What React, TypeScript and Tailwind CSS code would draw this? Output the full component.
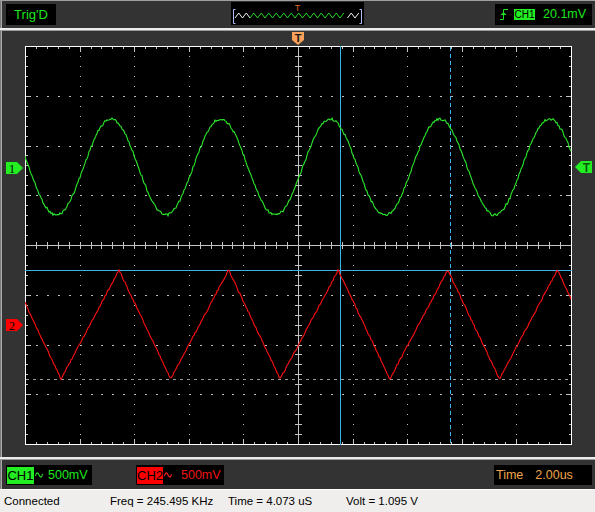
import React from "react";

const W = 546;
const H = 398;
const DX = W / 10;
const DY = H / 8;

const px = (v: number) => Math.round(v) + 0.5;

function noise(i: number, seed: number) {
  const s = Math.sin(i * 12.9898 + seed * 78.233) * 43758.5453;
  return s - Math.floor(s) - 0.5;
}

function sinePoints() {
  const pts: string[] = [];
  for (let x = 0; x <= W; x++) {
    const y = 121 - 48 * Math.cos((2 * Math.PI * (x - 86)) / 109.6) + noise(x, 1) * 2.6;
    pts.push(`${x},${y.toFixed(1)}`);
  }
  return pts.join(" ");
}

function trianglePoints() {
  const P = 109.6;
  const rise = 58;
  const fall = P - rise;
  const top = 224;
  const bottom = 333;
  const pts: string[] = [];
  for (let x = 0; x <= W; x++) {
    const t = (((x - 94) % P) + P) % P;
    let y = t < fall ? top + ((bottom - top) * t) / fall : bottom - ((bottom - top) * (t - fall)) / rise;
    y += noise(x, 2) * 1.8;
    pts.push(`${x},${y.toFixed(1)}`);
  }
  return pts.join(" ");
}

function Grid() {
  const ticks: React.ReactElement[] = [];
  const dots: React.ReactElement[] = [];

  for (let i = 1; i < 50; i++) {
    const x = px((i * DX) / 5);
    const len = i % 5 === 0 ? 5 : 2;
    ticks.push(<line key={`t${i}`} x1={x} y1={1} x2={x} y2={1 + len} />);
    ticks.push(<line key={`b${i}`} x1={x} y1={H} x2={x} y2={H - len} />);
    ticks.push(<line key={`c${i}`} x1={x} y1={196} x2={x} y2={203} />);
  }
  for (let j = 1; j < 40; j++) {
    const y = px((j * DY) / 5);
    const len = j % 5 === 0 ? 5 : 2;
    ticks.push(<line key={`l${j}`} x1={1} y1={y} x2={1 + len} y2={y} />);
    ticks.push(<line key={`r${j}`} x1={W} y1={y} x2={W - len} y2={y} />);
    ticks.push(<line key={`m${j}`} x1={270} y1={y} x2={277} y2={y} />);
  }

  for (let k = 1; k < 10; k++) {
    if (k === 5) continue;
    const col = Math.round(k * DX);
    for (let j = 1; j < 40; j++) {
      dots.push(<rect key={`v${k}-${j}`} x={col} y={Math.round((j * DY) / 5)} width={1} height={1} />);
    }
  }
  for (let k = 1; k < 8; k++) {
    if (k === 4) continue;
    const row = Math.round(k * DY);
    for (let i = 1; i < 50; i++) {
      dots.push(<rect key={`h${k}-${i}`} x={Math.round((i * DX) / 5)} y={row} width={2} height={1} />);
    }
  }

  return (
    <div className="w-[547px] h-[399px] bg-black shrink-0">
      <svg width={547} height={399} className="block" shapeRendering="crispEdges">
        <g fill="#bcbcbc">{dots}</g>
        <g stroke="#c4c4c4" strokeWidth={1}>
          <line x1={273.5} y1={0} x2={273.5} y2={399} />
          <line x1={0} y1={199.5} x2={547} y2={199.5} />
          {ticks}
        </g>
        <rect x={0.5} y={0.5} width={546} height={398} fill="none" stroke="#ffffff" />
        <line x1={0} y1={224.5} x2={547} y2={224.5} stroke="#3cb4e6" />
        <line x1={315.5} y1={0} x2={315.5} y2={399} stroke="#3cb4e6" />
        <line x1={425.5} y1={1} x2={425.5} y2={398} stroke="#3cb4e6" strokeDasharray="4 3" />
        <line x1={1} y1={333.5} x2={546} y2={333.5} stroke="#9a9a9a" strokeDasharray="3 4" />
        <g shapeRendering="auto">
          <polyline points={sinePoints()} fill="none" stroke="#2ae82a" strokeWidth={1.1} />
          <polyline points={trianglePoints()} fill="none" stroke="#ff1010" strokeWidth={1.1} />
        </g>
      </svg>
    </div>
  );
}

function TopWave() {
  const pts: [number, number][] = [];
  let up = false;
  for (let x = 4; x <= 129.01; x += 3.75) {
    pts.push([x, up ? 11 : 16]);
    up = !up;
  }
  const seg = (a: number, b: number) =>
    pts
      .filter(([x]) => x >= a - 0.01 && x <= b + 0.01)
      .map(([x, y]) => `${x},${y}`)
      .join(" ");
  return (
    <svg width={133} height={23} className="block">
      <text x={66.5} y={8.5} textAnchor="middle" fontSize={9} fill="#d8682c" fontFamily="Liberation Sans, Arial, sans-serif">
        T
      </text>
      <polyline points="4.5,7.5 2.5,7.5 2.5,21.5 4.5,21.5" fill="none" stroke="#b0bef8" />
      <polyline points="128.5,7.5 130.5,7.5 130.5,21.5 128.5,21.5" fill="none" stroke="#b0bef8" />
      <polyline points={seg(4, 19)} fill="none" stroke="#f2f2f2" />
      <polyline points={seg(19, 116)} fill="none" stroke="#22d822" />
      <polyline points={seg(116, 129)} fill="none" stroke="#f2f2f2" />
    </svg>
  );
}

function SineGlyph({ color }: { color: string }) {
  return (
    <svg width={8} height={8} className="block shrink-0">
      <path d="M0.5,5 C1.3,1 2.7,1 4,4 S6.7,7 7.5,3" fill="none" stroke={color} strokeWidth={1.1} />
    </svg>
  );
}

export default function App() {
  return (
    <div className="w-[595px] h-[512px] flex flex-col bg-[#333333] font-['Liberation_Sans',Arial,sans-serif] overflow-hidden">
      {/* top bar */}
      <div className="h-[28px] shrink-0 border-t border-[#a0a0a0] flex items-start pl-[6px] shadow-[inset_1px_0_0_#7c7c7c,inset_2px_0_0_#ababab]">
        <div className="mt-[3px] w-[50px] h-[21px] bg-black flex items-center justify-center text-[13px] leading-none text-[#1ee61e]">
          Trig'D
        </div>
        <div className="ml-[175px] mt-[1px] w-[133px] h-[23px] bg-black">
          <TopWave />
        </div>
        <div className="ml-[131px] mt-[3px] w-[97px] h-[21px] bg-black flex items-center pl-[5px]">
          <svg width={8} height={11} className="block shrink-0">
            <path d="M0,10.5 H3.5 V0.5 H8" fill="none" stroke="#22e022" />
            <path d="M0.5,6 L3.5,3 L6.5,6 Z" fill="#22e022" />
          </svg>
          <div className="ml-[6px] w-[21px] h-[11px] bg-[#22ee22] text-black text-[10px] leading-none flex items-center justify-center">
            CH1
          </div>
          <div className="ml-[8px] text-[12.5px] leading-none text-[#1ee61e]">20.1mV</div>
        </div>
      </div>

      {/* separator */}
      <div className="h-[3px] shrink-0 border-t-2 border-[#ececec] border-b border-b-[#9c9c9c]" />

      {/* scope area */}
      <div className="relative h-[426px] shrink-0 flex pl-[25px] pt-[15px] shadow-[inset_1px_0_0_#7c7c7c,inset_2px_0_0_#ababab]">
        <Grid />

        <svg width={12} height={13} className="absolute left-[292px] top-[1px]">
          <polygon points="0,0 12,0 12,8 6,13 0,8" fill="#f6a05a" />
          <text x={6} y={9.5} textAnchor="middle" fontSize={11} fontWeight="bold" fill="#1a1a1a" fontFamily="Liberation Sans, Arial, sans-serif">
            T
          </text>
        </svg>

        <svg width={17} height={12} className="absolute left-[6px] top-[131px]">
          <polygon points="0,0 11,0 17,6 11,12 0,12" fill="#22ee22" />
          <text x={6} y={10.5} textAnchor="middle" fontSize={12} fill="#000" fontFamily="Liberation Serif, serif">
            1
          </text>
        </svg>

        <svg width={17} height={12} className="absolute left-[6px] top-[288px]">
          <polygon points="0,0 11,0 17,6 11,12 0,12" fill="#ff0000" />
          <text x={6} y={10.5} textAnchor="middle" fontSize={12} fill="#000" fontFamily="Liberation Serif, serif">
            2
          </text>
        </svg>

        <svg width={17} height={12} className="absolute left-[575px] top-[130px]">
          <polygon points="0,6 6,0 17,0 17,12 6,12" fill="#22ee22" />
          <text x={11.5} y={10.5} textAnchor="middle" fontSize={12} fontWeight="bold" fill="#0a5a0a" fontFamily="Liberation Sans, Arial, sans-serif">
            T
          </text>
        </svg>
      </div>

      {/* separator */}
      <div className="h-[3px] shrink-0 border-t-2 border-[#ececec] border-b border-b-[#9c9c9c]" />

      {/* channel bar */}
      <div className="h-[29px] shrink-0 flex items-start pl-[6px] shadow-[inset_1px_0_0_#7c7c7c,inset_2px_0_0_#ababab]">
        <div className="mt-[5px] w-[86px] h-[20px] bg-black flex items-center pl-[1px] text-[12.5px] leading-none">
          <div className="w-[27px] h-[17px] bg-[#22ee22] text-black text-[13px] flex items-center justify-center">CH1</div>
          <div className="ml-[1px]">
            <SineGlyph color="#22e822" />
          </div>
          <span className="ml-[5px] text-[#1ee61e]">500mV</span>
        </div>
        <div className="ml-[44px] mt-[5px] w-[88px] h-[20px] bg-black flex items-center pl-[1px] text-[12.5px] leading-none">
          <div className="w-[26px] h-[17px] bg-[#ff0000] text-black text-[13px] flex items-center justify-center">CH2</div>
          <div className="ml-[1px]">
            <SineGlyph color="#ff2020" />
          </div>
          <span className="ml-[9px] text-[#ee1414]">500mV</span>
        </div>
        <div className="ml-[270px] mt-[5px] w-[98px] h-[20px] bg-black flex items-center pl-[2px] text-[12.5px] leading-none text-[#eea648]">
          <span>Time</span>
          <span className="ml-[12px]">2.00us</span>
        </div>
      </div>

      {/* status bar */}
      <div className="h-[23px] shrink-0 border-t border-white bg-[#efeeec] flex items-center pl-[4px] pt-[1px] text-[11.5px] leading-none text-black">
        <div className="w-[106px]">Connected</div>
        <div className="w-[118px]">Freq = 245.495 KHz</div>
        <div className="w-[118px]">Time = 4.073 uS</div>
        <div>Volt = 1.095 V</div>
      </div>
    </div>
  );
}
